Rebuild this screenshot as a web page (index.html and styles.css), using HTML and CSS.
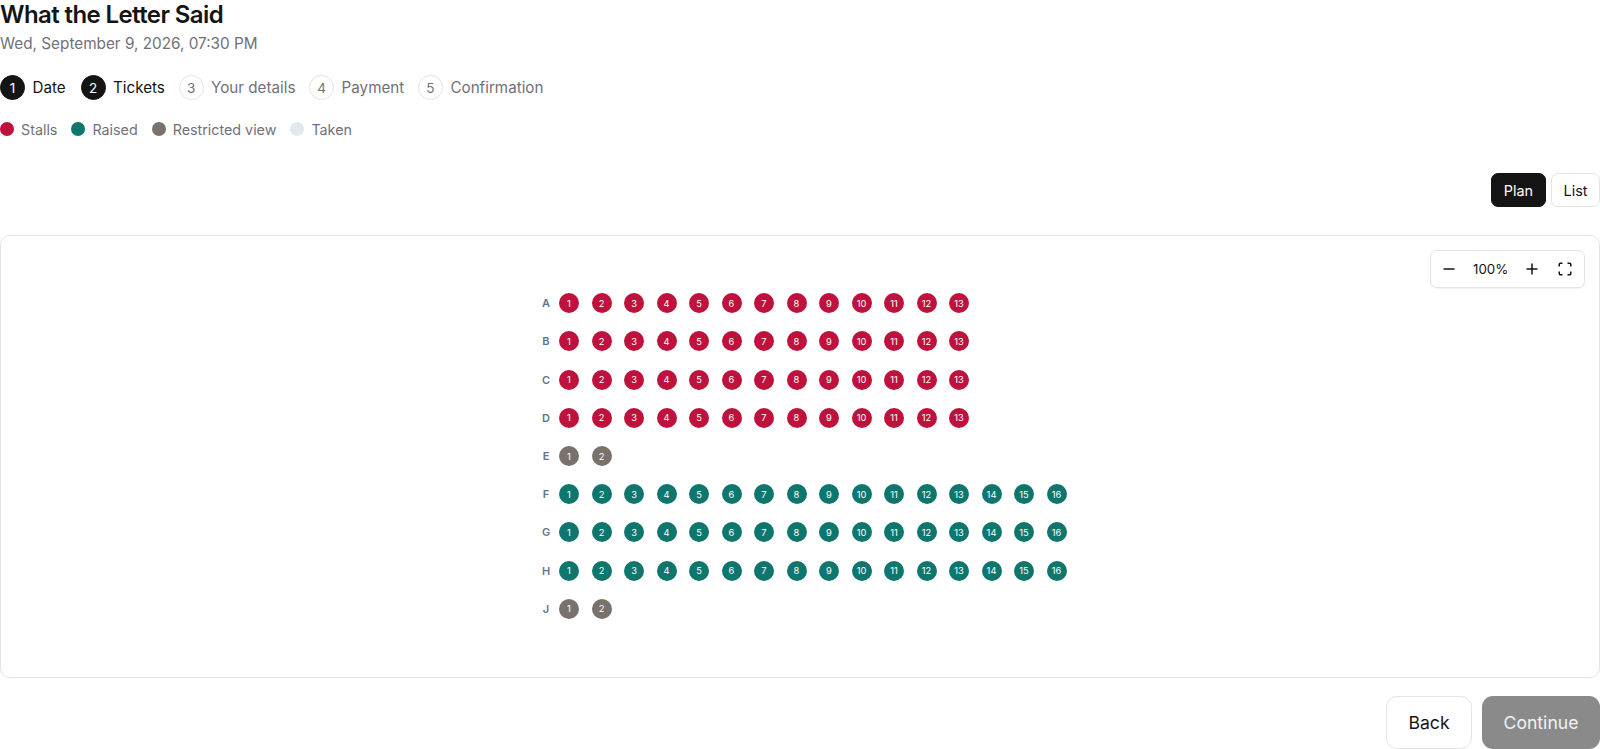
FILE: index.html
```html
<!DOCTYPE html>
<html lang="en">
<head>
<meta charset="utf-8">
<title>What the Letter Said</title>
<link rel="stylesheet" href="styles.css">
</head>
<body>
<main class="page">
  <h1 class="title">What the Letter Said</h1>
  <p class="when">Wed, September 9, 2026, 07:30 PM</p>
  <ol class="steps">
    <li class="step done first"><span class="num">1</span>Date</li>
    <li class="step done"><span class="num">2</span>Tickets</li>
    <li class="step"><span class="num">3</span>Your details</li>
    <li class="step"><span class="num">4</span>Payment</li>
    <li class="step"><span class="num">5</span>Confirmation</li>
  </ol>
  <ul class="legend">
    <li><span class="dot stalls"></span>Stalls</li>
    <li><span class="dot raised"></span>Raised</li>
    <li><span class="dot restricted"></span>Restricted view</li>
    <li><span class="dot taken"></span>Taken</li>
  </ul>
  <div class="views">
    <button class="view active">Plan</button>
    <button class="view">List</button>
  </div>
  <section class="map">
    <div class="zoom">
      <svg class="ico" viewBox="0 0 16 16"><path d="M2.5 8h11"/></svg>
      <span class="pct">100%</span>
      <svg class="ico" viewBox="0 0 16 16"><path d="M2.5 8h11M8 2.5v11"/></svg>
      <svg class="ico full" viewBox="0 0 16 16"><path d="M2.25 5.5V3.25a1 1 0 0 1 1-1H5.5M10.5 2.25h2.25a1 1 0 0 1 1 1V5.5M13.75 10.5v2.25a1 1 0 0 1-1 1H10.5M5.5 13.75H3.25a1 1 0 0 1-1-1V10.5"/></svg>
    </div>
    <div class="rows">
      <div class="row"><b>A</b><i class="s r">1</i><i class="s r">2</i><i class="s r">3</i><i class="s r">4</i><i class="s r">5</i><i class="s r">6</i><i class="s r">7</i><i class="s r">8</i><i class="s r">9</i><i class="s r">10</i><i class="s r">11</i><i class="s r">12</i><i class="s r">13</i></div>
      <div class="row"><b>B</b><i class="s r">1</i><i class="s r">2</i><i class="s r">3</i><i class="s r">4</i><i class="s r">5</i><i class="s r">6</i><i class="s r">7</i><i class="s r">8</i><i class="s r">9</i><i class="s r">10</i><i class="s r">11</i><i class="s r">12</i><i class="s r">13</i></div>
      <div class="row"><b>C</b><i class="s r">1</i><i class="s r">2</i><i class="s r">3</i><i class="s r">4</i><i class="s r">5</i><i class="s r">6</i><i class="s r">7</i><i class="s r">8</i><i class="s r">9</i><i class="s r">10</i><i class="s r">11</i><i class="s r">12</i><i class="s r">13</i></div>
      <div class="row"><b>D</b><i class="s r">1</i><i class="s r">2</i><i class="s r">3</i><i class="s r">4</i><i class="s r">5</i><i class="s r">6</i><i class="s r">7</i><i class="s r">8</i><i class="s r">9</i><i class="s r">10</i><i class="s r">11</i><i class="s r">12</i><i class="s r">13</i></div>
      <div class="row"><b>E</b><i class="s g">1</i><i class="s g">2</i></div>
      <div class="row"><b>F</b><i class="s t">1</i><i class="s t">2</i><i class="s t">3</i><i class="s t">4</i><i class="s t">5</i><i class="s t">6</i><i class="s t">7</i><i class="s t">8</i><i class="s t">9</i><i class="s t">10</i><i class="s t">11</i><i class="s t">12</i><i class="s t">13</i><i class="s t">14</i><i class="s t">15</i><i class="s t">16</i></div>
      <div class="row"><b>G</b><i class="s t">1</i><i class="s t">2</i><i class="s t">3</i><i class="s t">4</i><i class="s t">5</i><i class="s t">6</i><i class="s t">7</i><i class="s t">8</i><i class="s t">9</i><i class="s t">10</i><i class="s t">11</i><i class="s t">12</i><i class="s t">13</i><i class="s t">14</i><i class="s t">15</i><i class="s t">16</i></div>
      <div class="row"><b>H</b><i class="s t">1</i><i class="s t">2</i><i class="s t">3</i><i class="s t">4</i><i class="s t">5</i><i class="s t">6</i><i class="s t">7</i><i class="s t">8</i><i class="s t">9</i><i class="s t">10</i><i class="s t">11</i><i class="s t">12</i><i class="s t">13</i><i class="s t">14</i><i class="s t">15</i><i class="s t">16</i></div>
      <div class="row"><b>J</b><i class="s g">1</i><i class="s g">2</i></div>
    </div>
  </section>
  <div class="actions">
    <button class="btn back">Back</button>
    <button class="btn next">Continue</button>
  </div>
</main>
</body>
</html>
```

FILE: styles.css
```css
* { box-sizing: border-box; }
html, body { margin: 0; padding: 0; background: #fff; overflow: hidden; }
body { font-family: Inter, "Liberation Sans", sans-serif; color: #141414; }
.page { width: 1600px; height: 749px; padding-top: 1px; display: flex; flex-direction: column; }
.title { margin: 0; font-size: 24px; line-height: 28px; font-weight: 600; letter-spacing: -0.6px; }
.when { margin: 1px 0 0; font-size: 15.3px; line-height: 28px; color: #71717a; }
.steps { list-style: none; margin: 16.5px 0 0; padding: 0; display: flex; gap: 13.7px; }
.step { display: flex; align-items: center; gap: 7.5px; height: 26px; font-size: 15.2px; color: #71717a; }
.step.done { color: #141414; }
.step.first { margin-right: 1.2px; }
.num { width: 25px; height: 25px; border-radius: 50%; border: 1px solid #e4e4e7; display: flex; align-items: center; justify-content: center; font-size: 13.5px; }
.done .num { background: #141414; border-color: #141414; color: #fff; }
.legend { list-style: none; margin: 20.7px 0 0; padding: 0; display: flex; gap: 14px; font-size: 14.3px; color: #71717a; }
.legend li { display: flex; align-items: center; gap: 7px; height: 16px; }
.dot { width: 14px; height: 14px; border-radius: 50%; }
.stalls { background: #be123c; }
.raised { background: #0f766e; }
.restricted { background: #78716c; }
.taken { background: #e2e8f0; }
.views { display: flex; justify-content: flex-end; gap: 5px; margin-top: 36.3px; }
.view { height: 33.5px; padding: 0; font: 400 14.4px Inter, sans-serif; border: 1px solid #e4e4e7; border-radius: 7px; background: #fff; color: #141414; width: 49px; }
.view.active { width: 55px; background: #141414; border-color: #141414; color: #fff; }
.map { position: relative; margin-top: 28.2px; height: 443px; border: 1px solid #e4e4e7; border-radius: 10px; background: #fff; }
.zoom { position: absolute; top: 14px; right: 14px; width: 155px; height: 38px; padding: 0 10px; border: 1px solid #e4e4e7; border-radius: 7px; box-shadow: 0 1px 2px rgba(0,0,0,.06); background: #fff; display: flex; align-items: center; gap: 16px; font-size: 13.3px; }
.pct { width: 35px; text-align: center; }
.ico { flex: none; width: 16px; height: 16px; fill: none; stroke: #141414; stroke-width: 1.5; }
.full { margin-left: 0.8px; }
.rows { position: absolute; left: 540px; top: 48px; display: flex; flex-direction: column; }
.row { display: flex; align-items: center; height: 38.2px; }
.row b { width: 10px; margin-right: 8px; font-size: 11px; font-weight: 600; color: #64748b; text-align: center; }
.s { flex: none; width: 20px; height: 20px; margin-right: 12.5px; border-radius: 50%; display: flex; align-items: center; justify-content: center; font-size: 9.3px; font-style: normal; color: #fff; }
.s.r { background: #be123c; }
.s.t { background: #0f766e; }
.s.g { background: #78716c; }
.actions { display: flex; justify-content: flex-end; gap: 10px; margin-top: 17.5px; }
.btn { height: 53px; border-radius: 11px; font: 400 17.6px Inter, sans-serif; }
.back { width: 86px; background: #fff; border: 1px solid #e4e4e7; color: #141414; }
.next { width: 118px; background: #8a8a8a; border: 0; color: #f2f2f2; }
```
